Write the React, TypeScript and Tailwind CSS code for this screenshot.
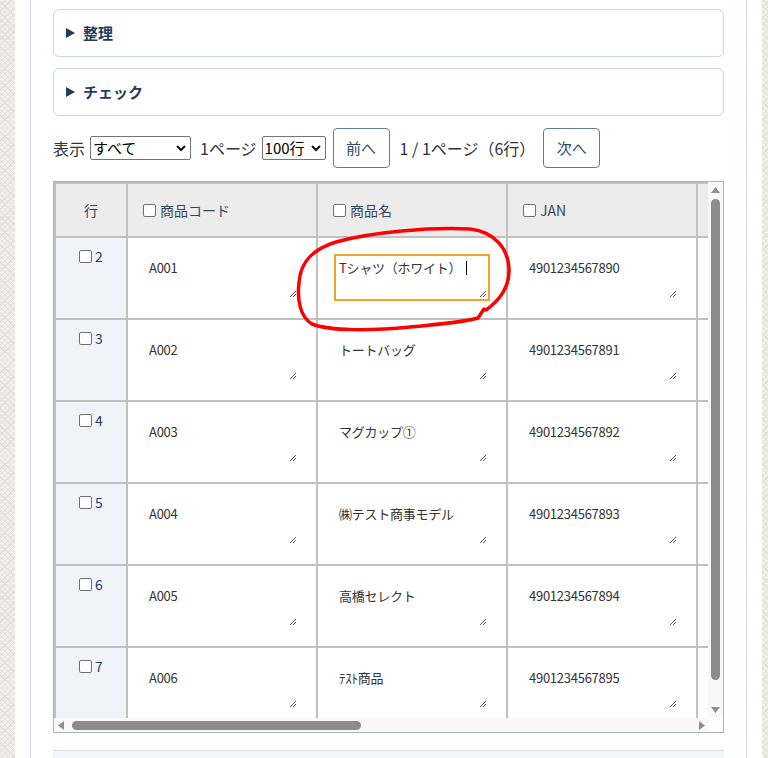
import clsx from 'clsx'

interface ProductRow {
  no: number
  code: string
  name: string
  jan: string
}

const rows: Array<ProductRow> = [
  { no: 2, code: 'A001', name: 'Tシャツ（ホワイト）', jan: '4901234567890' },
  { no: 3, code: 'A002', name: 'トートバッグ', jan: '4901234567891' },
  { no: 4, code: 'A003', name: 'マグカップ①', jan: '4901234567892' },
  { no: 5, code: 'A004', name: '㈱テスト商事モデル', jan: '4901234567893' },
  { no: 6, code: 'A005', name: '高橋セレクト', jan: '4901234567894' },
  { no: 7, code: 'A006', name: 'ﾃｽﾄ商品', jan: '4901234567895' },
]

function Check() {
  return <span className="inline-block h-[13px] w-[13px] shrink-0 rounded-[2px] border border-[#6f6f6f] bg-white" />
}

function Grip() {
  return (
    <svg className="absolute bottom-[1px] right-[1px]" width="9" height="9" viewBox="0 0 9 9">
      <path d="M8 2 L2 8 M8 5 L5 8" stroke="#555" strokeWidth="1" />
    </svg>
  )
}

function CellText({ value, active }: { value: string; active?: boolean }) {
  return (
    <div
      className={clsx(
        'relative h-[47px] w-full border-2 pl-[3px] pt-[3px] text-[13px] leading-[18px] text-[#333] whitespace-nowrap',
        active ? 'border-[#f4a32a]' : 'border-transparent'
      )}
    >
      <span className="tracking-[-0.02em]">{value}</span>
      {active && <span className="ml-[5px] inline-block h-[14px] w-px translate-y-[2px] bg-black" />}
      <Grip />
    </div>
  )
}

function Accordion({ label }: { label: string }) {
  return (
    <div className="flex h-[48px] items-center rounded-[6px] border border-[#c9d6e4] pl-[12px] text-[15px] font-bold text-[#1f3b5c]">
      <svg width="9" height="10" viewBox="0 0 9 10">
        <path d="M0 0 L9 5 L0 10 Z" fill="#1f3b5c" />
      </svg>
      <span className="ml-[8px]">{label}</span>
    </div>
  )
}

function FakeSelect({ value, width }: { value: string; width: string }) {
  return (
    <div className={clsx('flex h-[24px] items-center justify-between rounded-[2px] border border-[#767676] bg-white pl-[2px] pr-[4px] text-[15px] text-black', width)}>
      <span>{value}</span>
      <svg width="10" height="7" viewBox="0 0 10 7">
        <path d="M1 1 L5 5 L9 1" stroke="#111" strokeWidth="2" fill="none" />
      </svg>
    </div>
  )
}

function PagerButton({ label }: { label: string }) {
  return (
    <button className="h-[40px] w-[57px] rounded-[4px] border border-[#5f7c9c] bg-white text-[15px] text-[#2b4a6f]">
      {label}
    </button>
  )
}

export default function App() {
  return (
    <div className="relative min-h-screen overflow-hidden bg-[#f1efea] bg-[repeating-linear-gradient(45deg,transparent_0_3px,#e5e1d9_3px_4px),repeating-linear-gradient(-45deg,transparent_0_3px,#e5e1d9_3px_4px)] font-['Noto_Sans_CJK_JP',sans-serif]">
      <div className="ml-[15px] min-h-[758px] w-[747px] bg-white px-[15px]">
        <div className="min-h-[758px] border-x border-[#cfdbe8] px-[22px] pt-[9px]">
          <Accordion label="整理" />
          <div className="mt-[11px]">
            <Accordion label="チェック" />
          </div>

          {/* pager */}
          <div className="mt-[12px] flex h-[40px] items-center text-[16px] text-[#333]">
            <span>表示</span>
            <div className="ml-[5px]">
              <FakeSelect value="すべて" width="w-[101px]" />
            </div>
            <span className="ml-[9px]">1ページ</span>
            <div className="ml-[5px]">
              <FakeSelect value="100行" width="w-[64px]" />
            </div>
            <div className="ml-[7px]">
              <PagerButton label="前へ" />
            </div>
            <span className="ml-[10px]">1 / 1ページ（6行）</span>
            <div className="ml-[8px]">
              <PagerButton label="次へ" />
            </div>
          </div>

          {/* editable grid */}
          <div className="mt-[13px] flex h-[552px] flex-col border border-[#a3b3c5]">
            <div className="flex min-h-0 flex-1">
              <div className="min-w-0 flex-1 overflow-hidden">
                <div className="grid w-max grid-cols-[70px_188px_188px_188px_188px] gap-[2px] bg-[#c0c0c0] p-[2px]">
                  <div className="flex h-[52px] items-center justify-center bg-[#ececec] text-[14px] text-[#34495e]">行</div>
                  {['商品コード', '商品名', 'JAN'].map((h) => (
                    <div key={h} className="flex h-[52px] items-center gap-[4px] bg-[#ececec] px-[15px] text-[14px] text-[#34495e]">
                      <Check />
                      <span>{h}</span>
                    </div>
                  ))}
                  <div className="h-[52px] bg-[#ececec]" />
                  {rows.map((r, i) => (
                    <div key={r.no} className="contents">
                      <div className="flex h-[80px] justify-center gap-[3px] bg-[#f0f4f8] pt-[9px] text-[14px] leading-[18px] text-[#1d3d6b]">
                        <span className="mt-[1px]">
                          <Check />
                        </span>
                        <span>{r.no}</span>
                      </div>
                      <div className="bg-white p-[16px]">
                        <CellText value={r.code} />
                      </div>
                      <div className="bg-white p-[16px]">
                        <CellText value={r.name} active={i === 0} />
                      </div>
                      <div className="bg-white p-[16px]">
                        <CellText value={r.jan} />
                      </div>
                      <div className="bg-white p-[16px]">
                        <CellText value="" />
                      </div>
                    </div>
                  ))}
                </div>
              </div>
              {/* vertical scrollbar */}
              <div className="flex w-[15px] flex-col items-center bg-[#f8f8f8] pt-[5px] pb-[5px]">
                <svg width="9" height="6" viewBox="0 0 9 6">
                  <path d="M0 6 L4.5 0 L9 6 Z" fill="#8f8f8f" />
                </svg>
                <div className="mt-[6px] h-[481px] w-[9px] rounded-full bg-[#8c8c8c]" />
                <div className="flex-1" />
                <svg width="9" height="6" viewBox="0 0 9 6">
                  <path d="M0 0 L4.5 6 L9 0 Z" fill="#8f8f8f" />
                </svg>
              </div>
            </div>
            {/* horizontal scrollbar */}
            <div className="flex h-[14px]">
              <div className="flex flex-1 items-center bg-[#f8f8f8] pl-[4px] pr-[3px]">
                <svg width="6" height="9" viewBox="0 0 6 9">
                  <path d="M6 0 L0 4.5 L6 9 Z" fill="#8f8f8f" />
                </svg>
                <div className="ml-[8px] h-[9px] w-[289px] rounded-full bg-[#8c8c8c]" />
                <div className="flex-1" />
                <svg width="6" height="9" viewBox="0 0 6 9">
                  <path d="M0 0 L6 4.5 L0 9 Z" fill="#8f8f8f" />
                </svg>
              </div>
              <div className="w-[15px] bg-white" />
            </div>
          </div>

          <div className="mt-[17px] h-[20px] border-t border-[#d3dde8] bg-[#f3f6f9]" />
        </div>
      </div>

      {/* red pen circle around the edited cell */}
      <svg className="pointer-events-none absolute left-0 top-0" width="768" height="758" viewBox="0 0 768 758">
        <path
          d="M484 309 L478 318 C466 322 440 324 410 327 C370 331 330 331 312 324 C300 317 297 299 299 283 C300 264 310 250 336 242 C372 232 430 227 470 229 C496 232 508 250 509 268 C510 287 500 300 486 310"
          stroke="#ff0000"
          strokeWidth="3.5"
          fill="none"
          strokeLinecap="round"
          strokeLinejoin="round"
        />
      </svg>
    </div>
  )
}
